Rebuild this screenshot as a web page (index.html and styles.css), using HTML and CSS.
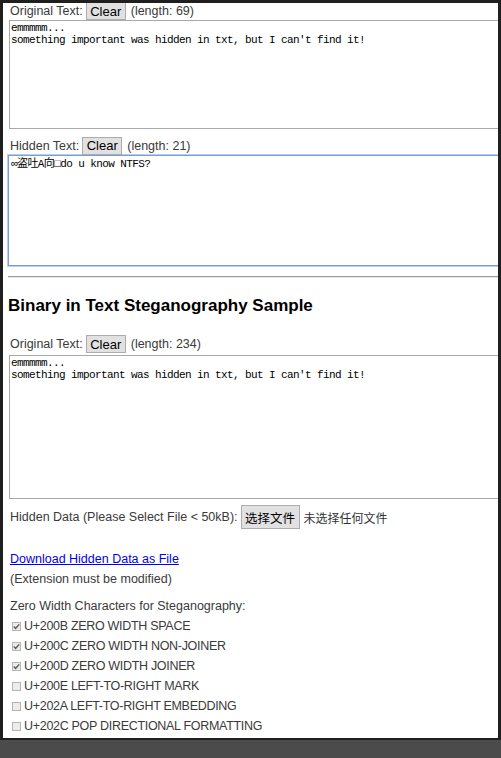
FILE: index.html
```html
<!DOCTYPE html>
<html>
<head>
<meta charset="utf-8">
<link rel="stylesheet" href="styles.css">
</head>
<body>
<div class="window">
  <div class="page">
    <div class="row row-first">
      <span class="lbl">Original Text:</span>
      <button class="btn">Clear</button>
      <span class="lbl">(length: 69)</span>
    </div>
    <textarea class="ta ta1">emmmmm...
something important was hidden in txt, but I can't find it!</textarea>

    <div class="row row2">
      <span class="lbl">Hidden Text:</span>
      <button class="btn">Clear</button>
      <span class="lbl">(length: 21)</span>
    </div>
    <textarea class="ta ta2 focused">∞盗吐A向□do u know NTFS?</textarea>

    <hr class="sep">

    <h3 class="title">Binary in Text Steganography Sample</h3>

    <div class="row row3">
      <span class="lbl">Original Text:</span>
      <button class="btn">Clear</button>
      <span class="lbl">(length: 234)</span>
    </div>
    <textarea class="ta ta3">emmmmm...
something important was hidden in txt, but I can't find it!</textarea>

    <div class="row row4">
      <span class="lbl">Hidden Data (Please Select File &lt; 50kB):</span>
      <button class="btn btn-file">选择文件</button>
      <span class="cjk">未选择任何文件</span>
    </div>

    <div class="line link-line"><a href="#" class="dl">Download Hidden Data as File</a></div>
    <div class="line">(Extension must be modified)</div>

    <div class="line zw-title">Zero Width Characters for Steganography:</div>
    <ul class="checks">
      <li class="chk"><span class="box on"><svg viewBox="0 0 9 9" width="9" height="9"><path d="M1.8 4.6 L3.6 6.4 L7.2 2.4" fill="none" stroke="#555" stroke-width="1.4"/></svg></span><span class="cl">U+200B ZERO WIDTH SPACE</span></li>
      <li class="chk"><span class="box on"><svg viewBox="0 0 9 9" width="9" height="9"><path d="M1.8 4.6 L3.6 6.4 L7.2 2.4" fill="none" stroke="#555" stroke-width="1.4"/></svg></span><span class="cl">U+200C ZERO WIDTH NON-JOINER</span></li>
      <li class="chk"><span class="box on"><svg viewBox="0 0 9 9" width="9" height="9"><path d="M1.8 4.6 L3.6 6.4 L7.2 2.4" fill="none" stroke="#555" stroke-width="1.4"/></svg></span><span class="cl">U+200D ZERO WIDTH JOINER</span></li>
      <li class="chk"><span class="box"></span><span class="cl">U+200E LEFT-TO-RIGHT MARK</span></li>
      <li class="chk"><span class="box"></span><span class="cl">U+202A LEFT-TO-RIGHT EMBEDDING</span></li>
      <li class="chk"><span class="box"></span><span class="cl">U+202C POP DIRECTIONAL FORMATTING</span></li>
    </ul>
  </div>
</div>
</body>
</html>
```

FILE: styles.css
```css
html, body {
  margin: 0;
  padding: 0;
}
body {
  background: #4b4b4b;
  height: 758px;
  overflow: hidden;
  font-family: "Liberation Sans", Arial, sans-serif;
  font-size: 12.5px;
  color: #3a3a3a;
}
.window {
  background: #1f1f1f;
  padding: 3px 3px 2px 3px;
}
.page {
  background: #fff;
  height: 735px;
  overflow: hidden;
  padding-left: 6px;
}
.row {
  display: flex;
  align-items: center;
  height: 18px;
  white-space: nowrap;
}
.row .lbl {
  padding-left: 1px;
}
.row .btn {
  margin: 0 4px 0 3px;
}
.row-first {
  margin-top: -1px;
}
.btn {
  box-sizing: border-box;
  height: 18px;
  width: 40px;
  padding: 0;
  background: #e1e1e1;
  border: 1px solid #adadad;
  border-radius: 0;
  font-family: "Liberation Sans", Arial, sans-serif;
  font-size: 13px;
  color: #000;
}
.ta {
  display: block;
  box-sizing: border-box;
  width: 560px;
  margin: 0;
  padding: 1px 1px;
  border: 1px solid #a9a9a9;
  resize: none;
  font-family: "Liberation Mono", "Noto Sans CJK JP", monospace;
  font-size: 11px;
  letter-spacing: -0.6px;
  line-height: 12px;
  color: #000;
  background: #fff;
  overflow: hidden;
}
.ta1 {
  height: 109px;
}
.row2 {
  margin-top: 7px;
  height: 19px;
}
.ta2 {
  height: 111px;
  margin-left: -1px;
  padding-left: 2px;
  padding-top: 2px;
  border: 1px solid #7a9cd8;
  box-shadow: 0 0 0 1px #b9cdf0;
}
.sep {
  margin: 10px 0 0 -1px;
  height: 0;
  border: 0;
  border-top: 1px solid #9c9c9c;
  border-bottom: 1px solid #e6e6e6;
  width: 560px;
}
.title {
  margin: 18px 0 0 -1px;
  height: 20px;
  line-height: 20px;
  font-size: 17px;
  font-weight: bold;
  color: #000;
}
.row3 {
  margin-top: 19px;
}
.ta3 {
  margin-top: 2px;
  height: 144px;
}
.row4 {
  margin-top: 6px;
  height: 24px;
}
.btn-file {
  width: 59px;
  height: 24px;
  font-family: "Noto Sans CJK SC", sans-serif;
  font-size: 12.5px;
}
.row4 .btn {
  margin: 0 4px 0 3px;
}
.cjk {
  font-family: "Noto Sans CJK SC", sans-serif;
  font-size: 12px;
  color: #333;
}
.line {
  height: 20px;
  line-height: 20px;
  padding-left: 1px;
  white-space: nowrap;
}
.link-line {
  margin-top: 20px;
}
.dl {
  color: #0000ee;
  text-decoration: underline;
}
.zw-title {
  margin-top: 8px;
  height: 19px;
  line-height: 19px;
}
.checks {
  list-style: none;
  margin: 0;
  padding: 0;
}
.chk {
  display: flex;
  align-items: center;
  height: 20px;
  white-space: nowrap;
}
.box {
  box-sizing: border-box;
  width: 9px;
  height: 9px;
  margin: 0 3px 0 3px;
  border: 1px solid #b4b4b4;
  background: #ececec;
  display: flex;
  align-items: center;
  justify-content: center;
}
.box svg {
  display: block;
  flex: none;
}
.cl {
  letter-spacing: -0.3px;
}
```
